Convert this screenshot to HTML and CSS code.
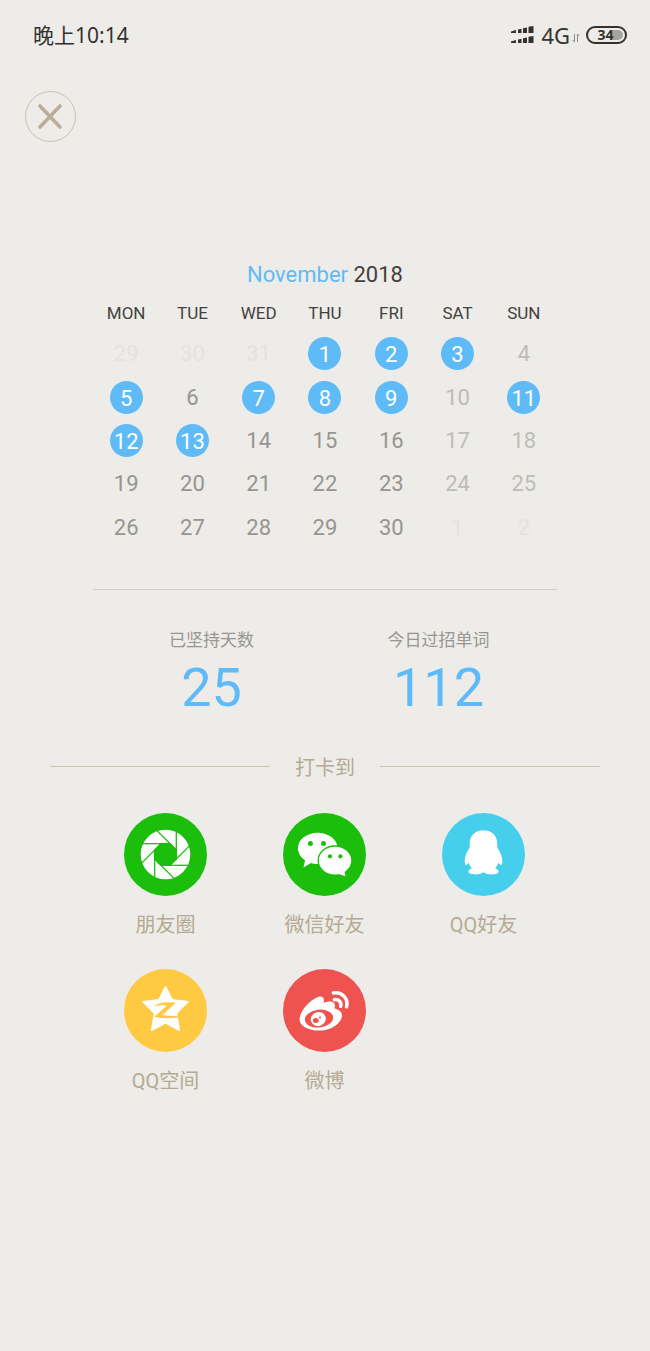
FILE: index.html
```html
<!DOCTYPE html>
<html lang="zh-CN">
<head>
    <meta charset="UTF-8">
    <meta name="viewport" content="width=device-width, initial-scale=1.0">
    <title>打卡</title>
    <link rel="stylesheet" href="styles.css">
</head>
<body>
    <header class="status-bar">
        <span class="status-time">晚上10:14</span>
        <div class="status-icons">
            <svg class="signal" width="23" height="18" viewBox="0 0 23 18" fill="#33322f" aria-hidden="true">
                <path d="M0 5.600 5 4v3H0zM7 3.400l3.500-.6V7H7zM12 2.200l4-.7V7h-4zM17.500.8 22.500 0v7h-5zM0 15.600 5 14v3H0zM7 13.400l3.500-.6V17H7zM12 12.200l4-.7V17h-4zM17.500 10.800l5-.8v7h-5z"/>
            </svg>
            <span class="network">4G</span>
            <svg class="data" width="8" height="8" viewBox="0 0 8 8" fill="none" stroke="#8d8c89" aria-hidden="true">
                <path d="M2.500 0v8L.5 6M5.500 8V0l2 2"/>
            </svg>
            <span class="battery">34</span>
        </div>
    </header>

    <main>
        <button type="button" class="close" aria-label="关闭">
            <svg width="27" height="27" viewBox="0 0 27 27" fill="none" stroke="#b9ae97" stroke-width="3.600" stroke-linecap="round">
                <path d="M3 3l20 21M23 3L3 24"/>
            </svg>
        </button>

        <section class="calendar">
            <h1><span class="month">November</span> 2018</h1>
            <table>
                <thead>
                    <tr><th>MON</th><th>TUE</th><th>WED</th><th>THU</th><th>FRI</th><th>SAT</th><th>SUN</th></tr>
                </thead>
                <tbody>
                    <tr>
                        <td class="other">29</td>
                        <td class="other">30</td>
                        <td class="other">31</td>
                        <td><span class="checked">1</span></td>
                        <td><span class="checked">2</span></td>
                        <td><span class="checked">3</span></td>
                        <td class="weekend">4</td>
                    </tr>
                    <tr>
                        <td><span class="checked">5</span></td>
                        <td>6</td>
                        <td><span class="checked">7</span></td>
                        <td><span class="checked">8</span></td>
                        <td><span class="checked">9</span></td>
                        <td class="weekend">10</td>
                        <td><span class="checked">11</span></td>
                    </tr>
                    <tr>
                        <td><span class="checked">12</span></td>
                        <td><span class="checked">13</span></td>
                        <td>14</td>
                        <td>15</td>
                        <td>16</td>
                        <td class="weekend">17</td>
                        <td class="weekend">18</td>
                    </tr>
                    <tr>
                        <td>19</td>
                        <td>20</td>
                        <td>21</td>
                        <td>22</td>
                        <td>23</td>
                        <td class="weekend">24</td>
                        <td class="weekend">25</td>
                    </tr>
                    <tr>
                        <td>26</td>
                        <td>27</td>
                        <td>28</td>
                        <td>29</td>
                        <td>30</td>
                        <td class="other">1</td>
                        <td class="other">2</td>
                    </tr>
                </tbody>
            </table>
        </section>

        <section class="stats">
            <div class="stat">
                <p class="stat-label">已坚持天数</p>
                <p class="stat-value">25</p>
            </div>
            <div class="stat">
                <p class="stat-label">今日过招单词</p>
                <p class="stat-value">112</p>
            </div>
        </section>

        <h2 class="share-title"><span>打卡到</span></h2>

        <section class="share-grid">
            <button type="button" class="share">
                <svg class="share-icon" viewBox="0 0 83 83" aria-hidden="true">
                    <circle cx="41.500" cy="41.500" r="41.500" fill="#1bbf0b"/>
                    <circle cx="41.500" cy="41.500" r="24.800" fill="#fff"/>
                    <g transform="translate(41.5 41.5)" fill="#1bbf0b" stroke="#1bbf0b" stroke-width="1.300">
                        <path d="M-4.500-10.800H4.500L10.800-4.500V4.500L4.500 10.800H-4.500L-10.800 4.500V-4.500z"/>
                        <path id="blade" d="M4.500-10.800H-23"/>
                        <use href="#blade" transform="rotate(45)"/>
                        <use href="#blade" transform="rotate(90)"/>
                        <use href="#blade" transform="rotate(135)"/>
                        <use href="#blade" transform="rotate(180)"/>
                        <use href="#blade" transform="rotate(225)"/>
                        <use href="#blade" transform="rotate(270)"/>
                        <use href="#blade" transform="rotate(315)"/>
                    </g>
                </svg>
                <span>朋友圈</span>
            </button>
            <button type="button" class="share">
                <svg class="share-icon" viewBox="0 0 83 83" aria-hidden="true">
                    <circle cx="41.500" cy="41.500" r="41.500" fill="#1bbf0b"/>
                    <g fill="#fff">
                        <ellipse cx="34.700" cy="35.300" rx="19.800" ry="15.600"/>
                        <path d="M22.500 45l-2 9.500 8-4.700z"/>
                    </g>
                    <ellipse cx="52" cy="47.500" rx="17.500" ry="15.200" fill="#1bbf0b"/>
                    <g fill="#fff">
                        <ellipse cx="52" cy="47.600" rx="16.200" ry="13.900"/>
                        <path d="M55 60.800l7.500 2.400-1.500-6.200z"/>
                    </g>
                    <g fill="#1bbf0b">
                        <circle cx="27.400" cy="30.400" r="2.500"/>
                        <circle cx="40.500" cy="30.400" r="2.500"/>
                        <circle cx="47" cy="43.300" r="2.100"/>
                        <circle cx="57.400" cy="43.300" r="2.100"/>
                    </g>
                </svg>
                <span>微信好友</span>
            </button>
            <button type="button" class="share">
                <svg class="share-icon" viewBox="0 0 83 83" aria-hidden="true">
                    <circle cx="41.500" cy="41.500" r="41.500" fill="#46cfec"/>
                    <path fill="#fff" d="M41.500 17.300C33 17.300 27.700 23 27.700 31c0 2 .2 3-.5 4.600C24.500 39.500 22.700 44 22.700 48c0 2.600.6 4 1.400 3.900.9 0 1.700-1 2.600-2.400.7 2.300 1.700 4.300 3.300 6-2.200.7-3.700 1.800-3.700 3.100 0 2 3.200 2.900 7.200 2.900 3.300 0 6-.7 7.300-2h1.400c1.300 1.300 4 2 7.300 2 4 0 7.200-.9 7.200-2.900 0-1.300-1.500-2.400-3.700-3.100 1.600-1.700 2.600-3.700 3.300-6 .9 1.400 1.700 2.400 2.600 2.400.8.1 1.400-1.300 1.400-3.900 0-4-1.800-8.500-4.500-12.400-.7-1.600-.5-2.600-.5-4.600 0-8-5.300-13.700-14-13.700z"/>
                </svg>
                <span>QQ好友</span>
            </button>
            <button type="button" class="share">
                <svg class="share-icon" viewBox="0 0 83 83" aria-hidden="true">
                    <circle cx="41.500" cy="41.500" r="41.500" fill="#ffca42"/>
                    <path fill="#fff" stroke="#fff" stroke-width="1.500" stroke-linejoin="round" d="M41.500 17.500l6.600 13.200 16 2-11.600 11.600 2.800 17-13.800-7.500-13.800 7.500 2.800-17L19 32.700l16-2z"/>
                    <path fill="#ffca42" d="M29.800 37c4-3.300 13-4.500 22-3.300L38.500 46c6.500 1 13 1.300 19.500.6-3.500 2.400-15 4-27.800 1.200L43 36.500c-4.500-.6-9-.5-13.200.5z"/>
                </svg>
                <span>QQ空间</span>
            </button>
            <button type="button" class="share">
                <svg class="share-icon" viewBox="0 0 83 83" aria-hidden="true">
                    <circle cx="41.500" cy="41.500" r="41.500" fill="#ef5350"/>
                    <path fill="#fff" d="M16.600 50.500c0-8 9.500-19.500 18.400-22.600 4.500-1.500 6.800.8 5.600 6 5-2.300 12.700-2.400 11.100 4.300-.2 1 .2 1.400 1.200 1.800 4 1.200 6.100 3.400 6.100 6.400 0 7.500-10.500 15.200-22.500 15.200-11.500 0-19.900-4.600-19.900-11.100z"/>
                    <ellipse cx="36" cy="49.600" rx="14.200" ry="8.900" fill="#ef5350" transform="rotate(-6 36 49.600)"/>
                    <ellipse cx="35.300" cy="50" rx="7.600" ry="6.900" fill="#fff" transform="rotate(-20 35.300 50)"/>
                    <ellipse cx="32.800" cy="51.500" rx="2.900" ry="2.500" fill="#ef5350"/>
                    <circle cx="37" cy="48.500" r="1.100" fill="#ef5350"/>
                    <g fill="none" stroke="#fff" stroke-width="3.500" stroke-linecap="round">
                        <path d="M50.300 24c8.500-1.700 15.500 5.500 13.200 13.800"/>
                        <path d="M51.300 30.700c4.300-.8 7.700 2.500 6.400 6.600"/>
                    </g>
                </svg>
                <span>微博</span>
            </button>
        </section>
    </main>
</body>
</html>
```
FILE: styles.css
```css
:root {
    --bg: #edece8;
    --blue: #5ebbf7;
    --dark: #42413d;
    --tan: #b5aa93;
}

* {
    margin: 0;
    padding: 0;
    box-sizing: border-box;
}

body {
    background-color: var(--bg);
    color: var(--dark);
    font-family: Roboto, "Noto Sans CJK SC", sans-serif;
}

button {
    background: none;
    border: none;
    font-family: inherit;
    cursor: pointer;
}

svg {
    display: block;
}

/* Status bar */
.status-bar {
    display: flex;
    justify-content: space-between;
    align-items: center;
    padding: 20px 23px 0 33px;
    height: 50px;
    color: #33322f;
    font-family: "Noto Sans", "Noto Sans CJK SC", sans-serif;
    font-size: 21px;
    line-height: 30px;
}

.status-icons {
    display: flex;
    align-items: center;
}

.network {
    margin-left: 7px;
    font-size: 22px;
}

.data {
    margin: 6px 6px 0 2px;
}

.battery {
    width: 41px;
    height: 18px;
    border: 2px solid #33322f;
    border-radius: 9px;
    background: linear-gradient(to right, transparent 24px, #a5a4a1 24px) content-box;
    padding: 2px 2px 2px 0;
    font-family: "Noto Sans", sans-serif;
    font-size: 14px;
    font-weight: 700;
    line-height: 10px;
    text-align: center;
}

/* Close button */
.close {
    display: flex;
    align-items: center;
    justify-content: center;
    width: 51px;
    height: 51px;
    margin: 41px 0 0 25px;
    border: 1px solid #c9c1b0;
    border-radius: 50%;
}

/* Calendar */
.calendar {
    margin: 118px 93px 0;
    padding-bottom: 41px;
    border-bottom: 1px solid #d0cfca;
}

.calendar h1 {
    margin-bottom: 4px;
    font-size: 22px;
    font-weight: 400;
    line-height: 30px;
    text-align: center;
}

.month {
    color: var(--blue);
}

.calendar table {
    width: 100%;
    height: 254px;
    table-layout: fixed;
    border-collapse: collapse;
}

.calendar th {
    height: 37px;
    padding-top: 1px;
    font-size: 17px;
    font-weight: 400;
}

.calendar td {
    padding-top: 2px;
    color: #969591;
    font-size: 22px;
    line-height: 33px;
    text-align: center;
}

.calendar .weekend {
    color: #bdbcb8;
}

.calendar .other {
    color: #e4e3df;
}

.checked {
    display: block;
    width: 33px;
    height: 33px;
    margin: 0 auto;
    border-radius: 50%;
    background-color: var(--blue);
    color: #fff;
    line-height: 35px;
}

/* Totals */
.stats {
    display: flex;
    margin: 38px 98px 0;
    text-align: center;
}

.stat {
    flex: 1;
}

.stat-label {
    color: #969591;
    font-size: 17px;
    line-height: 24px;
}

.stat-value {
    color: var(--blue);
    font-size: 54px;
    line-height: 72px;
}

/* Share targets */
.share-title {
    display: flex;
    align-items: center;
    gap: 25px;
    margin: 27px 50px 0;
    color: var(--tan);
    font-size: 20px;
    font-weight: 400;
    line-height: 28px;
}

.share-title span {
    padding-top: 3px;
}

.share-title::before,
.share-title::after {
    content: "";
    flex: 1;
    height: 1px;
    background-color: #cbc4b3;
}

.share-grid {
    display: grid;
    grid-template-columns: repeat(3, 1fr);
    row-gap: 30px;
    margin: 31px 87px 0 86px;
}

.share {
    display: flex;
    flex-direction: column;
    align-items: center;
    gap: 15px;
    color: var(--tan);
    font-size: 20px;
    line-height: 28px;
}

.share-icon {
    width: 83px;
    height: 83px;
}
```
